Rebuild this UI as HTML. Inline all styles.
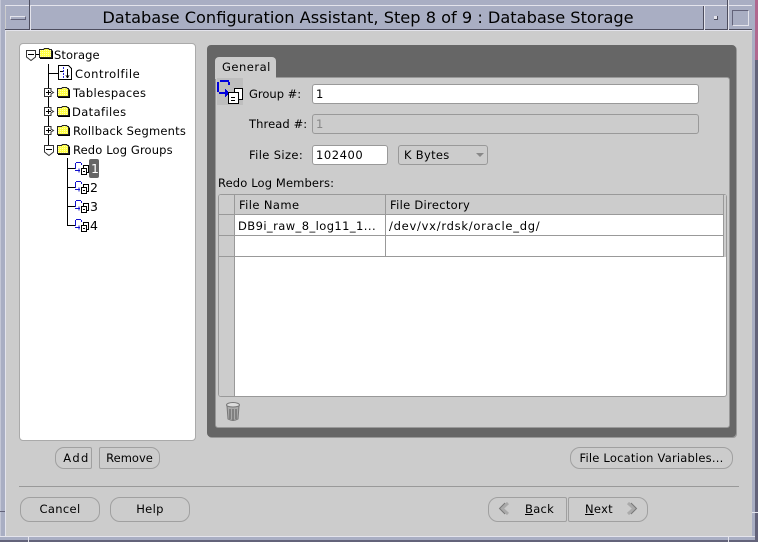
<!DOCTYPE html>
<html><head><meta charset="utf-8">
<style>
html,body{margin:0;padding:0;background:#ccc;}
#w{position:relative;width:758px;height:542px;overflow:hidden;background:#ccc;font-family:"DejaVu Sans","Liberation Sans",sans-serif;font-size:11.5px;color:#000;}
.a{position:absolute;box-sizing:border-box;}
.t{position:absolute;white-space:pre;line-height:16px;height:16px;font-size:11.5px;letter-spacing:.25px;}
.btn{position:absolute;box-sizing:border-box;border:1px solid #a0a0a0;background:#ccc;text-align:center;white-space:pre;font-size:11.5px;letter-spacing:.35px;}
.inp{position:absolute;box-sizing:border-box;border:1px solid #999;background:#fff;border-radius:3px;padding-left:3px;font-size:11.5px;line-height:18px;letter-spacing:.55px;}
svg{position:absolute;overflow:visible;}
</style></head><body>
<div id="w">
<!-- window frame -->
<div class="a" style="left:0;top:0;width:758px;height:6px;background:#a9aec3;"></div>
<div class="a" style="left:0;top:0;width:5px;height:542px;background:#a9aec3;"></div>
<div class="a" style="left:0;top:0;width:1px;height:542px;background:#c3c6d6;"></div>
<div class="a" style="left:5px;top:30px;width:1px;height:507px;background:#e4e4ec;"></div>
<div class="a" style="left:752px;top:0;width:3px;height:542px;background:#a9aec3;"></div>
<div class="a" style="left:755px;top:0;width:3px;height:542px;background:#63637a;"></div>
<div class="a" style="left:755px;top:0;width:3px;height:60px;background:#b0688f;"></div>
<div class="a" style="left:0;top:536px;width:755px;height:1px;background:#e4e4ec;"></div>
<div class="a" style="left:0;top:537px;width:755px;height:3px;background:#a9aec3;"></div>
<div class="a" style="left:0;top:540px;width:758px;height:2px;background:#63637a;"></div>
<div class="a" style="left:28px;top:537px;width:1px;height:5px;background:#e4e4ec;"></div>
<div class="a" style="left:728px;top:537px;width:1px;height:5px;background:#e4e4ec;"></div>
<div class="a" style="left:0;top:511px;width:5px;height:1px;background:#63637a;"></div>
<div class="a" style="left:752px;top:512px;width:6px;height:1px;background:#e4e4ec;"></div>
<!-- title bar -->
<div class="a" style="left:5px;top:5px;width:747px;height:1px;background:#e4e4ec;"></div>
<div class="a" style="left:6px;top:6px;width:746px;height:24px;background:#a9aec3;"></div>
<div class="a" style="left:5px;top:29px;width:747px;height:1px;background:#4d4d5e;"></div>
<div class="a" style="left:5px;top:30px;width:747px;height:1px;background:#e4e4ec;"></div>
<div class="a" style="left:29px;top:0;width:1px;height:30px;background:#4d4d5e;"></div>
<div class="a" style="left:30px;top:6px;width:1px;height:24px;background:#e4e4ec;"></div>
<div class="a" style="left:703px;top:6px;width:1px;height:24px;background:#4d4d5e;"></div>
<div class="a" style="left:704px;top:6px;width:1px;height:24px;background:#e4e4ec;"></div>
<div class="a" style="left:727px;top:0;width:1px;height:30px;background:#4d4d5e;"></div>
<div class="a" style="left:728px;top:0;width:1px;height:30px;background:#e4e4ec;"></div>
<div class="a" style="left:10px;top:16px;width:16px;height:4px;border:1px solid;border-color:#e4e4ec #63637a #63637a #e4e4ec;background:#a9aec3;"></div>
<div class="a" style="left:714px;top:16px;width:4px;height:4px;background:#e4e4ec;border-right:1px solid #4d4d5e;border-bottom:1px solid #4d4d5e;"></div>
<div class="a" style="left:732px;top:10px;width:17px;height:16px;border:1px solid;border-color:#63637a #e4e4ec #e4e4ec #63637a;"></div>
<div class="a" style="left:0;top:8px;width:736px;text-align:center;font-size:16.2px;line-height:20px;white-space:pre;">Database Configuration Assistant, Step 8 of 9 : Database Storage</div>

<!-- tree panel -->
<div class="a" style="left:19px;top:43px;width:177px;height:398px;background:#fff;border:1px solid #aaa;border-radius:4px;"></div>
<svg style="left:0;top:0" width="200" height="250" fill="none" stroke="#000" stroke-width="1" shape-rendering="crispEdges">
<path d="M48.500 64V150M48 73.500H58M67.500 158V225M67 168.500H75M67 187.500H75M67 206.500H75M67 225.500H75"/>
<path d="M35 54.500H39"/>
<g fill="#fff" stroke="#333">
<path d="M26.500 50.500H35.500V57L31 60.500L26.500 57Z" shape-rendering="auto"/>
<path d="M44.500 88.500H51V91L53.500 92.500L51 94V96.500H44.500Z" shape-rendering="auto"/>
<path d="M44.500 107.500H51V110L53.500 111.500L51 113V115.500H44.500Z" shape-rendering="auto"/>
<path d="M44.500 126.500H51V129L53.500 130.500L51 132V134.500H44.500Z" shape-rendering="auto"/>
<path d="M44.500 145.500H53.500V152L49 155.500L44.500 152Z" shape-rendering="auto"/>
</g>
<path d="M28 54.500H34M46 92.500H51M48.500 90V95M46 111.500H51M48.500 109V114M46 130.500H51M48.500 128V133M46 149.500H52"/>
</svg>
<!-- folders -->
<svg style="left:0;top:0" width="200" height="250">
<defs><pattern id="d" width="2" height="2" patternUnits="userSpaceOnUse"><rect width="2" height="2" fill="#ffff44"/><rect width="1" height="1" fill="#ffffb0"/></pattern></defs>
<g fill="url(#d)" stroke="#222" shape-rendering="crispEdges">
<path d="M39.500 49.500h4l1-1h4l1 1h2v8h-12z"/>
<path d="M57.500 88.500h4l1-1h4l1 1h1v8h-11z"/>
<path d="M57.500 107.500h4l1-1h4l1 1h1v8h-11z"/>
<path d="M57.500 126.500h4l1-1h4l1 1h1v8h-11z"/>
<path d="M57.500 145.500h4l1-1h4l1 1h1v8h-11z"/>
</g>
<path d="M40 58.500h12.500v-8M58 97.500h11.500v-8M58 116.500h11.500v-8M58 135.500h11.500v-8M58 154.500h11.500v-8" stroke="#000" fill="none" shape-rendering="crispEdges"/>
<g stroke="#000" fill="#fff" shape-rendering="crispEdges">
<path d="M58.500 65.500h10l3 3v11h-13z"/>
</g>
<path d="M63.500 67v11" stroke="#2222dd" stroke-dasharray="2 1" shape-rendering="crispEdges"/>
<path d="M60 71.500h3M67.500 69v8M66 75.500l1.500 2 1.500-2" stroke="#000" fill="none" shape-rendering="crispEdges"/>
<!-- group icons small -->
<g fill="none" shape-rendering="crispEdges">
<g id="g1">
<path d="M75.500 169v-6M76 162.500h5M81.500 163v2M75 170.500h5M79 168.500v4" stroke="#1111cc"/>
<path d="M83.500 165.500h5v7h-5z" stroke="#000" fill="#fff"/>
<path d="M81.500 168.500h5v6h-5z" stroke="#000" fill="#fff"/>
<path d="M83 171.500h2" stroke="#000"/>
</g>
<g transform="translate(0,19)"><path d="M75.500 169v-6M76 162.500h5M81.500 163v2M75 170.500h5M79 168.500v4" stroke="#1111cc"/><path d="M83.500 165.500h5v7h-5z" stroke="#000" fill="#fff"/><path d="M81.500 168.500h5v6h-5z" stroke="#000" fill="#fff"/><path d="M83 171.500h2" stroke="#000"/></g>
<g transform="translate(0,38)"><path d="M75.500 169v-6M76 162.500h5M81.500 163v2M75 170.500h5M79 168.500v4" stroke="#1111cc"/><path d="M83.500 165.500h5v7h-5z" stroke="#000" fill="#fff"/><path d="M81.500 168.500h5v6h-5z" stroke="#000" fill="#fff"/><path d="M83 171.500h2" stroke="#000"/></g>
<g transform="translate(0,57)"><path d="M75.500 169v-6M76 162.500h5M81.500 163v2M75 170.500h5M79 168.500v4" stroke="#1111cc"/><path d="M83.500 165.500h5v7h-5z" stroke="#000" fill="#fff"/><path d="M81.500 168.500h5v6h-5z" stroke="#000" fill="#fff"/><path d="M83 171.500h2" stroke="#000"/></g>
</g>
</svg>
<span class="t" style="left:54px;top:47px;letter-spacing:.1px;">Storage</span>
<span class="t" style="left:75px;top:66px;letter-spacing:.56px;">Controlfile</span>
<span class="t" style="left:73px;top:85px;letter-spacing:.35px;">Tablespaces</span>
<span class="t" style="left:72px;top:104px;letter-spacing:.39px;">Datafiles</span>
<span class="t" style="left:73px;top:123px;letter-spacing:.2px;">Rollback Segments</span>
<span class="t" style="left:73px;top:142px;letter-spacing:.13px;">Redo Log Groups</span>
<div class="a" style="left:89px;top:159px;width:10px;height:19px;background:#666;border-radius:2px;"></div>
<span class="t" style="left:91px;top:161px;color:#fff;font-size:12.5px;">1</span>
<span class="t" style="left:90px;top:180px;font-size:12.5px;">2</span>
<span class="t" style="left:90px;top:199px;font-size:12.5px;">3</span>
<span class="t" style="left:90px;top:218px;font-size:12.5px;">4</span>

<!-- tab panel -->
<div class="a" style="left:207px;top:45px;width:529px;height:392px;background:#666;border-radius:4px;box-shadow:1px 1px 0 #999;"></div>
<div class="a" style="left:215px;top:77px;width:515px;height:351px;background:#ccc;border:1px solid #999;border-radius:3px;"></div>
<div class="a" style="left:215px;top:57px;width:61px;height:22px;background:#ccc;border-radius:4px 4px 0 0;"></div>
<span class="t" style="left:222px;top:59px;letter-spacing:.5px;">General</span>
<!-- big icon -->
<div class="a" style="left:217px;top:78px;width:26px;height:27px;background:#bebebe;"></div>
<svg style="left:0;top:0" width="260" height="110" fill="none" shape-rendering="crispEdges">
<path d="M220 81h9M218 82v10M219 93h6M229 82v3" stroke="#0000dd" stroke-width="2"/>
<path d="M225 89h1v1h1v1h1v1h1v2h-1v1h-1v1h-1v1h-1z" fill="#0000dd"/>
<path d="M234.500 88.500h8v11h-8z" fill="#fff" stroke="#000"/>
<path d="M228.500 92.500h10v11h-10z" fill="#fff" stroke="#000"/>
<path d="M231 97.500h4M231 100.500h4" stroke="#000"/>
</svg>
<span class="t" style="left:249px;top:86px;letter-spacing:0;">Group #:</span>
<div class="inp" style="left:312px;top:84px;width:387px;height:20px;">1</div>
<span class="t" style="left:249px;top:116px;letter-spacing:.1px;">Thread #:</span>
<div class="inp" style="left:312px;top:114px;width:387px;height:20px;background:#ccc;color:#888;">1</div>
<span class="t" style="left:249px;top:147px;letter-spacing:.37px;">File Size:</span>
<div class="inp" style="left:312px;top:145px;width:76px;height:20px;">102400</div>
<div class="inp" style="left:398px;top:145px;width:90px;height:20px;background:#ccc;padding-left:5px;letter-spacing:.3px;">K Bytes</div>
<svg style="left:0;top:0" width="490" height="165"><path d="M476 153h8l-4 4z" fill="#888"/></svg>
<span class="t" style="left:218px;top:175px;letter-spacing:.13px;">Redo Log Members:</span>

<!-- table -->
<div class="a" style="left:218px;top:194px;width:509px;height:203px;background:#fff;border:1px solid #999;border-radius:3px;"></div>
<div class="a" style="left:724px;top:195px;width:2px;height:62px;background:#ccc;"></div>
<div class="a" style="left:219px;top:195px;width:16px;height:201px;background:#ccc;border-radius:2px 0 0 2px;"></div>
<div class="a" style="left:235px;top:195px;width:488px;height:20px;background:#ccc;"></div>
<div class="a" style="left:219px;top:214px;width:505px;height:1px;background:#999;"></div>
<div class="a" style="left:219px;top:235px;width:505px;height:1px;background:#999;"></div>
<div class="a" style="left:219px;top:256px;width:505px;height:1px;background:#999;"></div>
<div class="a" style="left:234px;top:195px;width:1px;height:201px;background:#999;"></div>
<div class="a" style="left:385px;top:195px;width:1px;height:62px;background:#999;"></div>
<div class="a" style="left:723px;top:195px;width:1px;height:62px;background:#999;"></div>
<span class="t" style="left:239px;top:197px;letter-spacing:.4px;">File Name</span>
<span class="t" style="left:390px;top:197px;letter-spacing:.3px;">File Directory</span>
<span class="t" style="left:238px;top:218px;letter-spacing:.42px;">DB9i_raw_8_log11_1...</span>
<span class="t" style="left:389px;top:218px;letter-spacing:.74px;">/dev/vx/rdsk/oracle_dg/</span>
<!-- trash -->
<svg style="left:0;top:0" width="250" height="425">
<ellipse cx="233" cy="405" rx="6.500" ry="2.500" fill="#ddd" stroke="#777"/>
<path d="M227 406l1 13q5 3 10 0l1-13q-6 2-12 0z" fill="#aaa" stroke="#777"/>
<path d="M230 409v10M233 409v11M236 409v10" stroke="#555"/>
</svg>

<!-- buttons -->
<div class="btn" style="left:55px;top:447px;width:37px;height:22px;line-height:20px;border-radius:9px 2px 2px 9px;letter-spacing:1.4px;padding-left:6px;">Add</div>
<div class="btn" style="left:99px;top:447px;width:61px;height:22px;line-height:20px;border-radius:2px 9px 9px 2px;letter-spacing:0;">Remove</div>
<div class="btn" style="left:570px;top:447px;width:163px;height:22px;line-height:20px;border-radius:10px;letter-spacing:.2px;">File Location Variables...</div>
<div class="a" style="left:19px;top:486px;width:720px;height:1px;background:#999;"></div>
<div class="btn" style="left:20px;top:497px;width:80px;height:25px;line-height:23px;border-radius:10px;">Cancel</div>
<div class="btn" style="left:110px;top:497px;width:80px;height:25px;line-height:23px;border-radius:10px;">Help</div>
<div class="btn" style="left:488px;top:497px;width:79px;height:25px;border-radius:10px 2px 2px 10px;"></div>
<div class="btn" style="left:568px;top:497px;width:80px;height:25px;border-radius:2px 10px 10px 2px;"></div>
<span class="t" style="left:525px;top:501px;letter-spacing:.3px;"><u>B</u>ack</span>
<span class="t" style="left:585px;top:501px;letter-spacing:.3px;"><u>N</u>ext</span>
<svg style="left:0;top:0" width="660" height="525" fill="none">
<path d="M508 503l-6 5.500 6 5.500" stroke="#aaa" stroke-width="3"/>
<path d="M505 503l-5.500 5.500 5.500 5.500" stroke="#777" stroke-width="1"/>
<path d="M628 503l6 5.500-6 5.500" stroke="#aaa" stroke-width="3"/>
<path d="M631 503l5.500 5.500-5.500 5.500" stroke="#777" stroke-width="1"/>
</svg>
</div>
</body></html>
